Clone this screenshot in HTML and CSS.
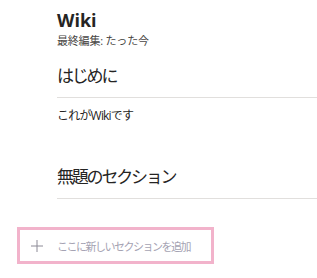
FILE: index.html
```html
<!DOCTYPE html>
<html lang="ja">
<head>
<meta charset="utf-8">
<link rel="stylesheet" href="styles.css">
</head>
<body>
<div class="page">
  <header class="head">
    <h1 class="title">Wiki</h1>
    <div class="meta">最終編集: たった今</div>
  </header>
  <section class="sec">
    <h2 class="sec-title">はじめに</h2>
    <p class="sec-body">これがWikiです</p>
  </section>
  <section class="sec">
    <h2 class="sec-title">無題のセクション</h2>
  </section>
</div>
<div class="add-wrap">
  <div class="add">
    <svg class="plus" width="12" height="12" viewBox="0 0 12 12"><path d="M6 0V12M0 6H12" stroke="#8c8a96" stroke-width="1" fill="none"/></svg>
    <span class="add-text">ここに新しいセクションを追加</span>
  </div>
</div>
</body>
</html>
```
FILE: styles.css
```css
html, body {
  margin: 0;
  padding: 0;
  background: #ffffff;
}
body {
  font-family: "Open Sans", "Noto Sans CJK JP", sans-serif;
  color: #252423;
}
.page {
  padding-left: 57px;
}
.head {
  padding-top: 8px;
}
.title {
  margin: 0;
  font-size: 18px;
  font-weight: 700;
  line-height: 24px;
}
.meta {
  margin-top: 2px;
  font-size: 11px;
  line-height: 14px;
  color: #484644;
  letter-spacing: -0.2px;
}
.sec-title {
  margin: 0;
  font-size: 17px;
  font-weight: 400;
  line-height: 20px;
  letter-spacing: -2.2px;
  padding-top: 18px;
  padding-bottom: 11px;
  border-bottom: 1px solid #e1dfdd;
}
.sec-body {
  margin: 0;
  font-size: 12px;
  line-height: 16px;
  letter-spacing: -0.8px;
  padding-top: 10px;
  padding-bottom: 25px;
}
.add-wrap {
  padding: 28px 0 0 17px;
}
.add {
  box-sizing: border-box;
  width: 197px;
  height: 37px;
  border: 3px solid #f2b3cb;
  display: flex;
  align-items: center;
  gap: 14px;
  padding-left: 11px;
}
.plus {
  display: block;
}
.add-text {
  font-size: 11px;
  letter-spacing: -1.5px;
  color: #a5a3b3;
}
```
